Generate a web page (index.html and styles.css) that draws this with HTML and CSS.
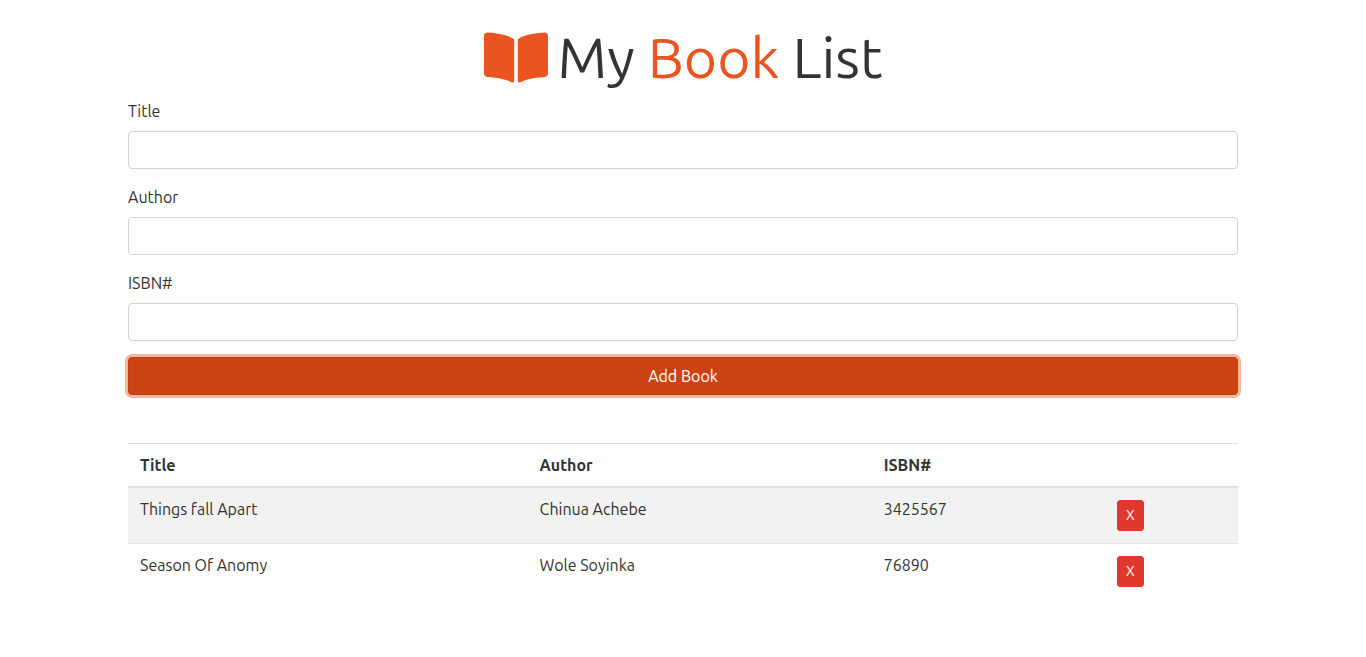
FILE: index.html
```html
<!DOCTYPE html>
<html lang="en">
  <head>
    <meta charset="UTF-8" />
    <meta name="viewport" content="width=device-width, initial-scale=1.0" />
    <title>My Book List</title>
    <link rel="stylesheet" href="styles.css">
  </head>
  <body>
    <div class="container">
      <h1 class="heading">
        <svg class="book-icon" viewBox="0 0 576 512" aria-hidden="true">
          <path d="M542.22 32.05c-54.8 3.11-163.72 14.43-230.96 55.59-4.64 2.84-7.27 7.89-7.27 13.17v363.87c0 11.55 12.63 18.85 23.28 13.49 69.18-34.82 169.23-44.32 218.7-46.92 16.89-.89 30.02-14.43 30.02-30.66V62.75c.01-17.71-15.35-31.74-33.77-30.7zM264.73 87.64C197.5 46.48 88.58 35.17 33.78 32.05 15.36 31.01 0 45.04 0 62.75V400.6c0 16.24 13.13 29.78 30.02 30.66 49.49 2.6 149.59 12.11 218.77 46.95 10.62 5.35 23.21-1.94 23.21-13.46V100.63c0-5.29-2.62-10.14-7.27-12.99z" />
        </svg>
        <span>My <span class="primary">Book</span> List</span>
      </h1>

      <form id="book-form">
        <div class="form-group">
          <label for="title">Title</label>
          <input type="text" id="title" class="form-control" />
        </div>
        <div class="form-group">
          <label for="author">Author</label>
          <input type="text" id="author" class="form-control" />
        </div>
        <div class="form-group">
          <label for="isbn">ISBN#</label>
          <input type="text" id="isbn" class="form-control" />
        </div>
        <button type="submit" class="btn-add">Add Book</button>
      </form>

      <table class="book-table">
        <thead>
          <tr>
            <th class="col-title">Title</th>
            <th class="col-author">Author</th>
            <th class="col-isbn">ISBN#</th>
            <th></th>
          </tr>
        </thead>
        <tbody id="book-list">
          <tr>
            <td>Things fall Apart</td>
            <td>Chinua Achebe</td>
            <td>3425567</td>
            <td><button type="button" class="btn-delete">X</button></td>
          </tr>
          <tr>
            <td>Season Of Anomy</td>
            <td>Wole Soyinka</td>
            <td>76890</td>
            <td><button type="button" class="btn-delete">X</button></td>
          </tr>
        </tbody>
      </table>
    </div>

    <script>
      const list = document.getElementById("book-list");

      function addCell(row, text) {
        const cell = document.createElement("td");
        cell.textContent = text;
        row.appendChild(cell);
        return cell;
      }

      document.getElementById("book-form").addEventListener("submit", (e) => {
        e.preventDefault();
        const title = document.getElementById("title").value;
        const author = document.getElementById("author").value;
        const isbn = document.getElementById("isbn").value;

        if (title && author && isbn) {
          const row = document.createElement("tr");
          addCell(row, title);
          addCell(row, author);
          addCell(row, isbn);
          addCell(row, "").innerHTML =
            '<button type="button" class="btn-delete">X</button>';
          list.appendChild(row);
          e.target.reset();
        } else {
          alert("Please fill in all fields");
        }
      });

      list.addEventListener("click", (e) => {
        if (e.target.classList.contains("btn-delete")) {
          e.target.closest("tr").remove();
        }
      });
    </script>
  </body>
</html>
```
FILE: styles.css
```css
* {
  box-sizing: border-box;
}
body {
  margin: 0;
  font-family: Ubuntu, "Noto Sans", sans-serif;
  font-size: 16px;
  line-height: 24px;
  color: #333;
  background-color: #fff;
}
.container {
  max-width: 1140px;
  margin: 24px auto 0;
  padding: 0 15px;
}
.heading {
  display: flex;
  justify-content: center;
  align-items: center;
  gap: 10px;
  margin: 0 0 8px;
  font-size: 57px;
  font-weight: 400;
  line-height: 67px;
}
.book-icon {
  width: 64px;
  height: 57px;
  fill: #e95420;
}
.primary {
  color: #e95420;
}
.form-group {
  margin-bottom: 16px;
}
.form-group label {
  display: block;
  margin-bottom: 8px;
}
.form-control {
  display: block;
  width: 100%;
  height: 38px;
  padding: 6px 12px;
  font: inherit;
  color: #495057;
  border: 1px solid #ced4da;
  border-radius: 4px;
}
.btn-add {
  display: block;
  width: 100%;
  height: 38px;
  padding: 6px 12px;
  font: inherit;
  color: #fff;
  background-color: #cd4414;
  border: 1px solid #c34113;
  border-radius: 4px;
  box-shadow: 0 0 0 3px rgba(236, 110, 65, 0.5);
  cursor: pointer;
}
.book-table {
  width: 100%;
  margin-top: 48px;
  border-collapse: collapse;
  line-height: 18px;
}
.book-table th,
.book-table td {
  padding: 12px;
  text-align: left;
  vertical-align: top;
  border-top: 1px solid #dee2e6;
}
.book-table thead th {
  border-bottom: 2px solid #dee2e6;
}
.book-table tbody tr:nth-child(odd) {
  background-color: #f2f2f2;
}
.col-title {
  width: 36%;
}
.col-author {
  width: 31%;
}
.col-isbn {
  width: 21%;
}
.btn-delete {
  display: block;
  width: 27px;
  height: 31px;
  padding: 3px 8px 5px;
  font: inherit;
  font-size: 14px;
  color: #fff;
  background-color: #df382c;
  border: 1px solid #df382c;
  border-radius: 3px;
  cursor: pointer;
}
```
